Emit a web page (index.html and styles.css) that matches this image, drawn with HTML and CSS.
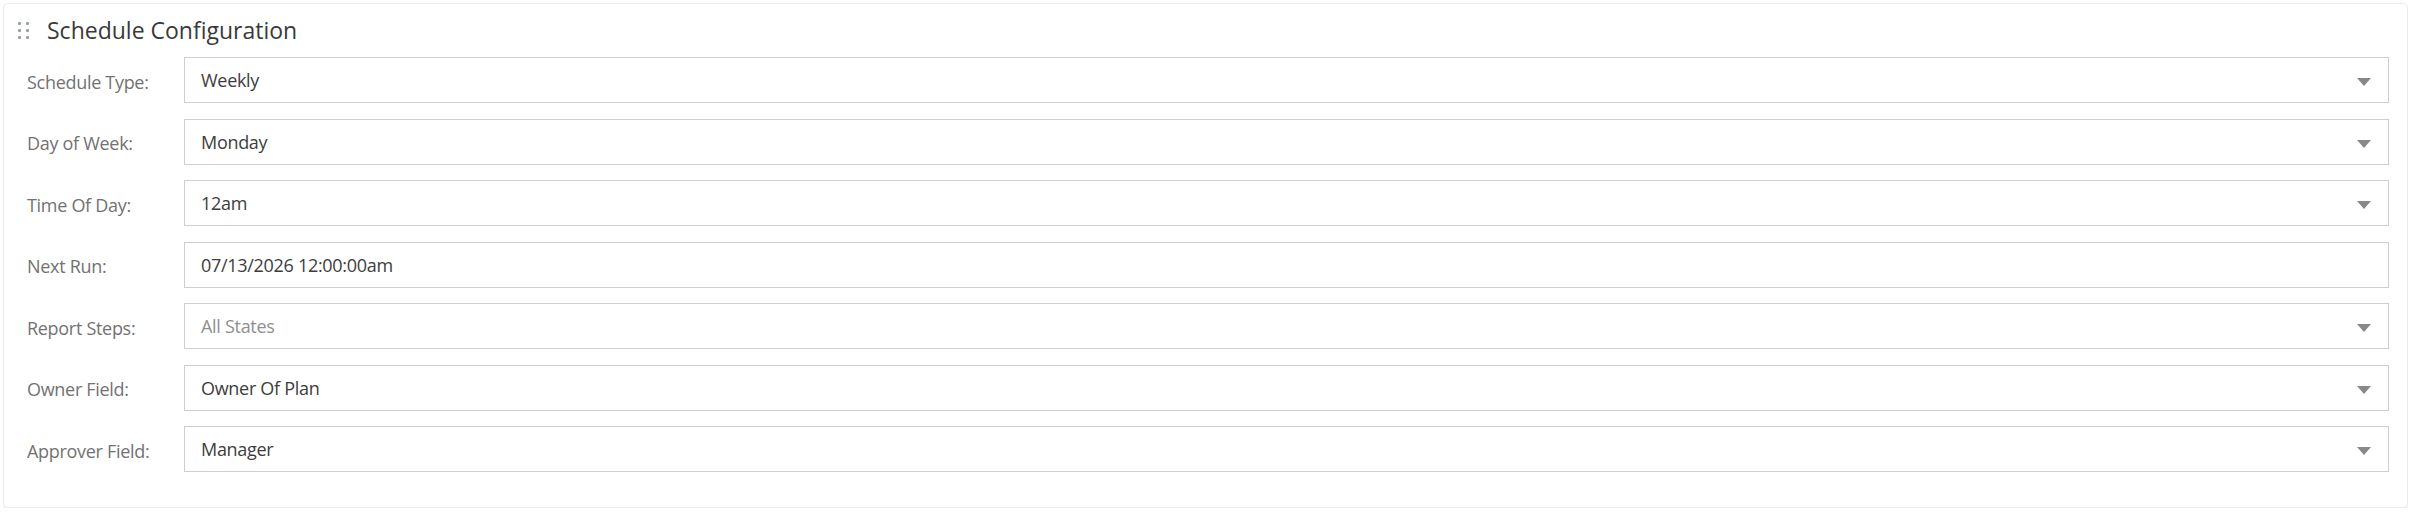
FILE: index.html
```html
<!DOCTYPE html>
<html lang="en">
<head>
    <meta charset="UTF-8">
    <meta name="viewport" content="width=device-width, initial-scale=1.0">
    <title>Schedule Configuration</title>
    <link rel="stylesheet" href="styles.css">
</head>
<body>

    <div class="panel">
        <div class="panel-header">
            <span class="grip">
                <i></i><i></i>
                <i></i><i></i>
                <i></i><i></i>
            </span>
            <h2 class="panel-title">Schedule Configuration</h2>
        </div>

        <div class="form">
            <div class="form-row">
                <label class="form-label">Schedule Type:</label>
                <div class="field dropdown">Weekly</div>
            </div>
            <div class="form-row">
                <label class="form-label">Day of Week:</label>
                <div class="field dropdown">Monday</div>
            </div>
            <div class="form-row">
                <label class="form-label">Time Of Day:</label>
                <div class="field dropdown">12am</div>
            </div>
            <div class="form-row">
                <label class="form-label">Next Run:</label>
                <div class="field">07/13/2026 12:00:00am</div>
            </div>
            <div class="form-row">
                <label class="form-label">Report Steps:</label>
                <div class="field dropdown placeholder">All States</div>
            </div>
            <div class="form-row">
                <label class="form-label">Owner Field:</label>
                <div class="field dropdown">Owner Of Plan</div>
            </div>
            <div class="form-row">
                <label class="form-label">Approver Field:</label>
                <div class="field dropdown">Manager</div>
            </div>
        </div>
    </div>

</body>
</html>
```

FILE: styles.css
```css
body {
    margin: 3px 7px 0 3px;
    font-family: "Open Sans", "Noto Sans", Arial, sans-serif;
    background-color: #fff;
    color: #333;
}

.panel {
    background-color: #fff;
    border: 1px solid #ebebeb;
    border-radius: 5px;
    box-shadow: 0 3px 5px rgba(0, 0, 0, 0.09);
    padding: 6px 18px 35px 23px;
}

.panel-header {
    display: flex;
    align-items: center;
    height: 40px;
}

.grip {
    display: grid;
    grid-template-columns: repeat(2, 3px);
    gap: 4px 5px;
    margin-left: -9px;
    margin-right: 18px;
}

.grip i {
    width: 3px;
    height: 3px;
    background-color: #9aa0a8;
    border-radius: 1px;
}

.panel-title {
    margin: 0;
    font-size: 23px;
    font-weight: 400;
    color: #3a3a3a;
}

.form {
    display: flex;
    flex-direction: column;
    gap: 15.5px;
    margin-top: 7px;
}

.form-row {
    display: flex;
    align-items: center;
}

.form-label {
    width: 157px;
    flex-shrink: 0;
    font-size: 18px;
    letter-spacing: -0.3px;
    color: #727272;
    padding-top: 3px;
}

.field {
    position: relative;
    flex: 1;
    height: 44px;
    line-height: 44px;
    border: 1px solid #cfcfcf;
    padding: 0 16px;
    font-size: 18px;
    letter-spacing: -0.3px;
    color: #3d3d3d;
}

.field.placeholder {
    color: #8f8f8f;
}

.dropdown::after {
    content: "";
    position: absolute;
    right: 17px;
    top: 20px;
    border-left: 7px solid transparent;
    border-right: 7px solid transparent;
    border-top: 8px solid #888;
}
```
